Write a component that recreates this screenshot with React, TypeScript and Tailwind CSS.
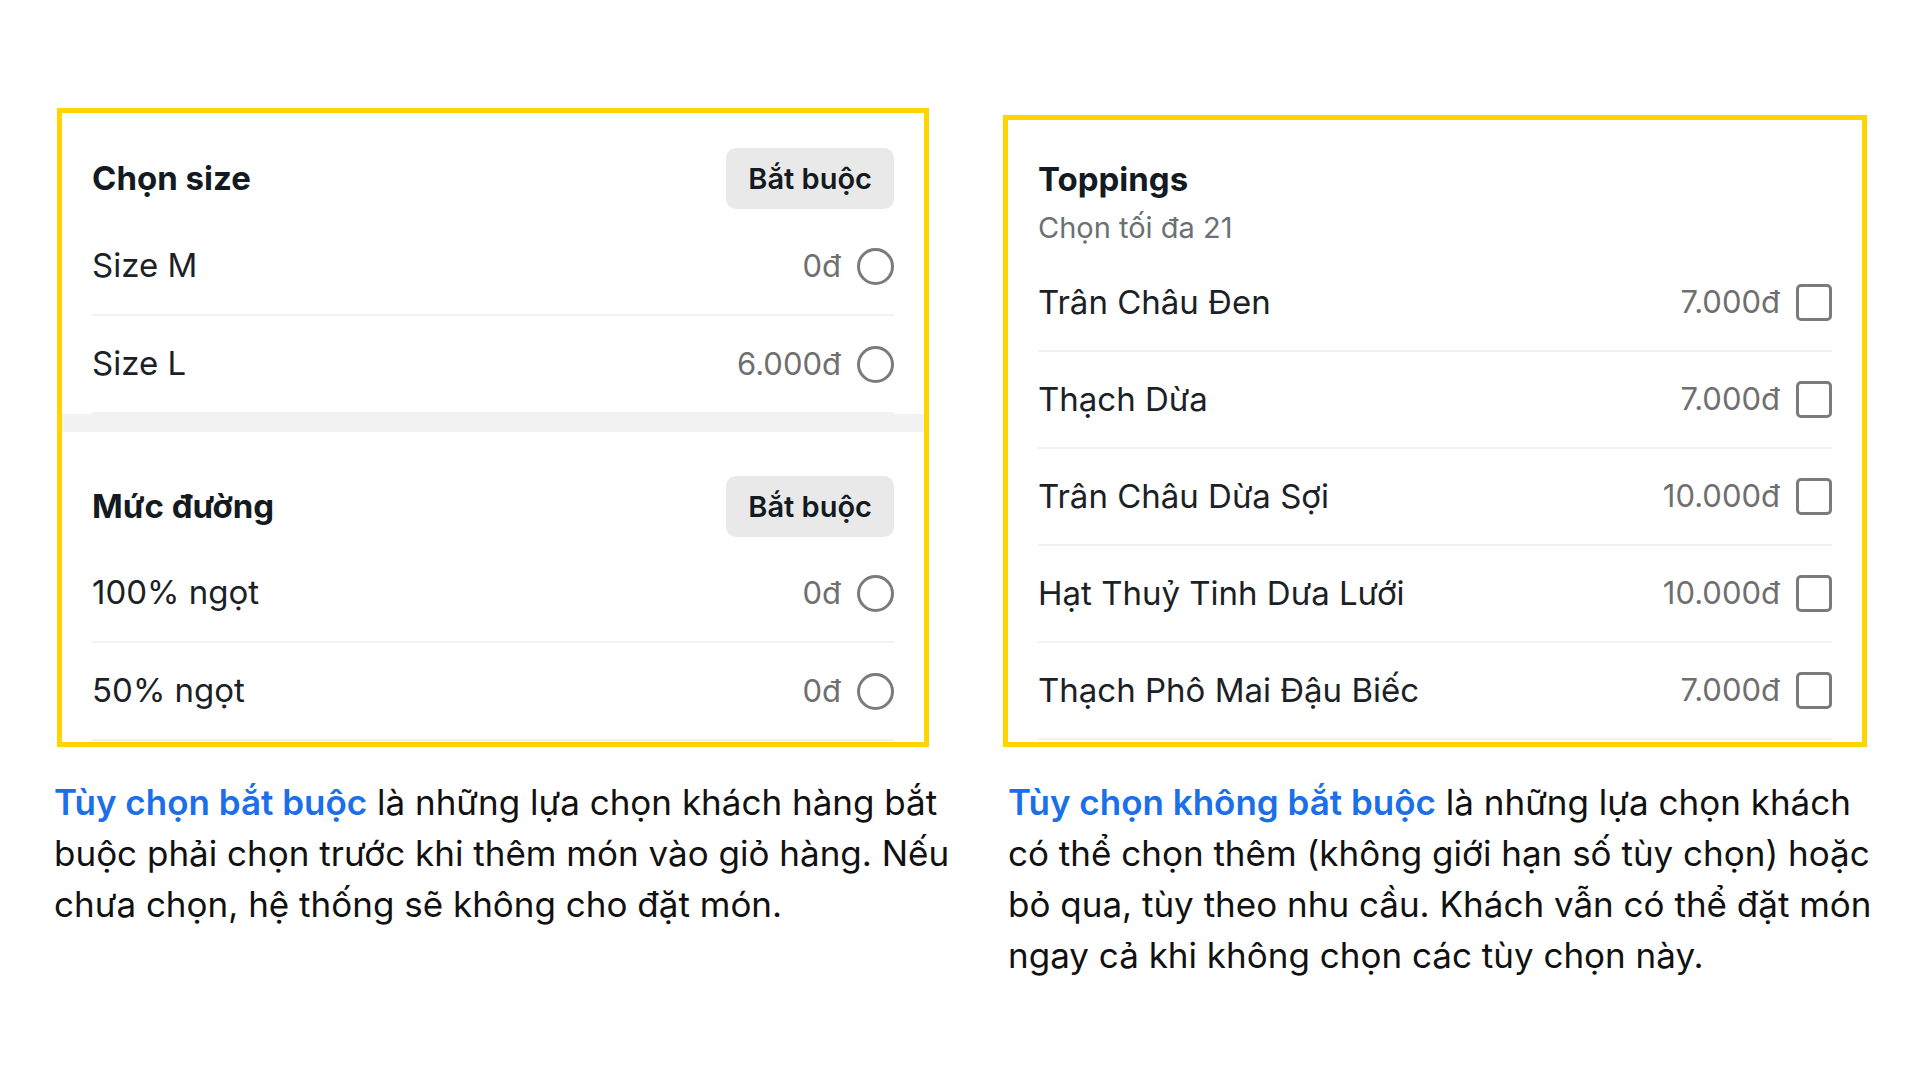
import React from "react";

const sizes = [
  { name: "Size M", price: "0đ" },
  { name: "Size L", price: "6.000đ" },
];

const sugar = [
  { name: "100% ngọt", price: "0đ" },
  { name: "50% ngọt", price: "0đ" },
];

const toppings = [
  { name: "Trân Châu Đen", price: "7.000đ" },
  { name: "Thạch Dừa", price: "7.000đ" },
  { name: "Trân Châu Dừa Sợi", price: "10.000đ" },
  { name: "Hạt Thuỷ Tinh Dưa Lưới", price: "10.000đ" },
  { name: "Thạch Phô Mai Đậu Biếc", price: "7.000đ" },
];

function Badge() {
  return (
    <span className="flex h-[61px] items-center rounded-[10px] bg-[#e9e9e9] px-[22px] text-[29px] font-semibold text-[#141a21]">
      Bắt buộc
    </span>
  );
}

function OptionRow({ name, price, kind, h }: { name: string; price: string; kind: "radio" | "check"; h: string }) {
  return (
    <div className={`flex items-center justify-between border-b-2 border-[#f1f1f1] ${h}`}>
      <span className="text-[33px] text-[#1c2126]">{name}</span>
      <div className="flex items-center gap-[16px]">
        <span className="text-[31px] text-[#6f6f6f]">{price}</span>
        {kind === "radio" ? (
          <span className="block h-[37px] w-[37px] rounded-full border-[3px] border-[#7b7b7b]" />
        ) : (
          <span className="block h-[37px] w-[36px] rounded-[5px] border-[3px] border-[#7b7b7b]" />
        )}
      </div>
    </div>
  );
}

export default function App() {
  return (
    <div className="flex h-[1080px] w-[1920px] bg-white pl-[54px] font-['Inter',sans-serif]">
      {/* mandatory options */}
      <div className="flex w-[880px] flex-col">
        <div className="ml-[3px] mt-[108px] h-[639px] w-[872px] overflow-hidden border-[5px] border-[#ffd500] bg-white">
          <div className="px-[30px] pt-[35px]">
            <div className="mb-[9px] flex items-center justify-between">
              <span className="text-[33px] font-bold text-[#141a21]">Chọn size</span>
              <Badge />
            </div>
            {sizes.map((o) => (
              <OptionRow key={o.name} {...o} kind="radio" h="h-[98px]" />
            ))}
          </div>
          <div className="h-[18px] bg-[#f2f2f2]" />
          <div className="px-[30px] pt-[44px]">
            <div className="mb-[8px] flex items-center justify-between">
              <span className="text-[33px] font-bold text-[#141a21]">Mức đường</span>
              <Badge />
            </div>
            {sugar.map((o) => (
              <OptionRow key={o.name} {...o} kind="radio" h="h-[98px]" />
            ))}
          </div>
        </div>
        <p className="mt-[30px] whitespace-nowrap text-[35px] leading-[51px] text-[#111111]">
          <span className="font-semibold text-[#1b6fe8]">Tùy chọn bắt buộc</span> là những lựa chọn khách hàng bắt
          <br />
          buộc phải chọn trước khi thêm món vào giỏ hàng. Nếu
          <br />
          chưa chọn, hệ thống sẽ không cho đặt món.
        </p>
      </div>

      {/* optional toppings */}
      <div className="ml-[69px] flex w-[864px] flex-col">
        <div className="mt-[115px] h-[632px] w-[864px] overflow-hidden border-[5px] border-[#ffd500] bg-white px-[30px] pt-[40px]">
          <div className="text-[33px] font-bold leading-[38px] text-[#141a21]">Toppings</div>
          <div className="mt-[13px] text-[29px] leading-[34px] text-[#6b7075]">Chọn tối đa 21</div>
          <div className="mt-[10px]">
            {toppings.map((o) => (
              <OptionRow key={o.name} {...o} kind="check" h="h-[97px]" />
            ))}
          </div>
        </div>
        <p className="ml-[5px] mt-[30px] whitespace-nowrap text-[35px] leading-[51px] text-[#111111]">
          <span className="font-semibold text-[#1b6fe8]">Tùy chọn không bắt buộc</span> là những lựa chọn khách
          <br />
          có thể chọn thêm (không giới hạn số tùy chọn) hoặc
          <br />
          bỏ qua, tùy theo nhu cầu. Khách vẫn có thể đặt món
          <br />
          ngay cả khi không chọn các tùy chọn này.
        </p>
      </div>
    </div>
  );
}
